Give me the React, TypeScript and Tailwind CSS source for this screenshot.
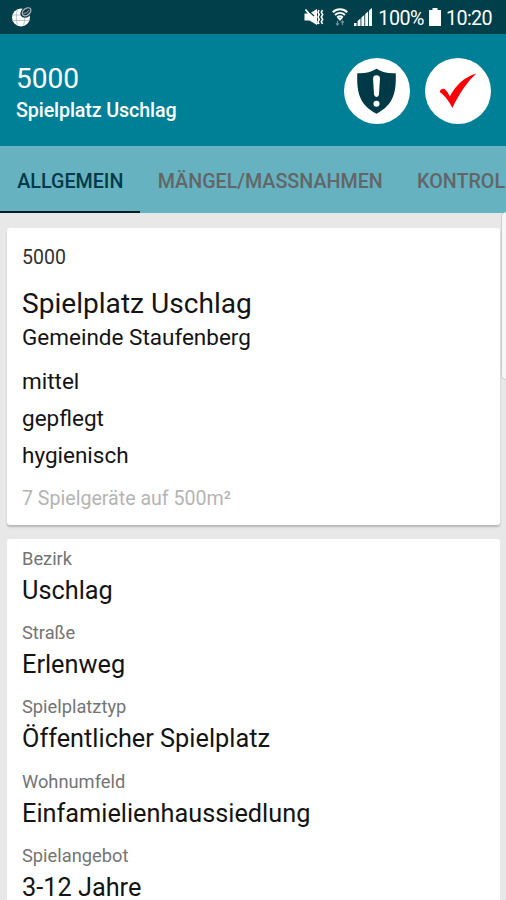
const tabs = ["ALLGEMEIN", "MÄNGEL/MASSNAHMEN", "KONTROL"]

const ratings = ["mittel", "gepflegt", "hygienisch"]

const details = [
    { label: "Bezirk", value: "Uschlag" },
    { label: "Straße", value: "Erlenweg" },
    { label: "Spielplatztyp", value: "Öffentlicher Spielplatz" },
    { label: "Wohnumfeld", value: "Einfamielienhaussiedlung" },
    { label: "Spielangebot", value: "3-12 Jahre" },
]

const GlobeIcon = () => (
    <svg width="22" height="22" viewBox="0 0 22 22" fill="none">
        <circle cx="10" cy="11.500" r="9" fill="#fff" />
        <path d="M1 9h17M1 14.500h17M6.500 3.500c-1.600 5-1.600 11 0 16M12.500 3.500c1.800 5 1.800 11 0 16" stroke="#a3b5b9" strokeWidth="0.8" />
        <ellipse cx="15" cy="6.500" rx="6" ry="4.800" transform="rotate(-35 15 6.500)" fill="#17343f" />
        <ellipse cx="15.600" cy="5.800" rx="4.900" ry="3.200" transform="rotate(-40 15.600 5.800)" stroke="#a9bec5" strokeWidth="1.300" />
        <path d="M12.500 7.500c2.200 0 4.500-1.500 5.500-3.500" stroke="#a9bec5" strokeWidth="0.9" />
    </svg>
)

const StatusBar = () => (
    <div className="flex h-[34px] shrink-0 items-center justify-between bg-[#01404b] pr-[14px] pl-[11px]">
        <GlobeIcon />
        <div className="flex items-center text-white">
            <svg width="20" height="18" viewBox="0 0 20 18" fill="none">
                <path d="M0.500 5.500h5L13 1v16l-7.500-4.500h-5z" fill="#fff" />
                <path d="M3 1.500L10 8" stroke="#01404b" strokeWidth="1.200" />
                <path d="M1.500 1.500L13.500 16" stroke="#fff" strokeWidth="1.800" />
                <path d="M15 2l-1 2.300 1.200 2.300-1.200 2.400 1.200 2.400-1.200 2.300 1 2.300M18.500 2l-1.200 2.300 1.400 2.300-1.400 2.400 1.400 2.400-1.400 2.300 1.200 2.300" stroke="#fff" strokeWidth="1.600" />
            </svg>
            <svg className="ml-2" width="16" height="18" viewBox="0 0 16 18" fill="none">
                <path d="M0.800 4.200c4-4 10.400-4 14.400 0M3 7c3-2.700 7-2.700 10 0M5.200 9.600c1.700-1.400 3.900-1.400 5.600 0" stroke="#fff" strokeWidth="2.100" />
                <path d="M5.500 10h5L8 13z" fill="#fff" />
                <path d="M5.500 12.800v4M4 15.300l1.500 1.800L7 15.300M10.500 17.200v-4M9 14.700l1.500-1.800 1.500 1.800" stroke="#6f959c" strokeWidth="1.100" />
            </svg>
            <svg className="ml-1.5" width="18" height="18" viewBox="0 0 18 18" fill="#fff">
                <path d="M0 15h2.500v3H0zM3.600 13l2.900-2.500V18H3.600zM7.400 9.500l2.900-2.500v11H7.400zM11.200 6l2.900-2.500V18h-2.900zM15 2.500L18 0v18h-3z" />
            </svg>
            <span className="ml-1.5 pt-1 text-[19.700px] leading-6 tracking-[-0.500px]">100%</span>
            <svg className="ml-[5px]" width="12" height="18" viewBox="0 0 12 18" fill="#fff">
                <path d="M3.500 0h5v2H12v16H0V2h3.500z" />
            </svg>
            <span className="ml-[5px] pt-1 text-[19.700px] leading-6 tracking-[-0.600px]">10:20</span>
        </div>
    </div>
)

const Header = () => (
    <div className="flex h-[112px] shrink-0 items-center justify-between bg-[#008097] pr-[15px] pl-4 text-white">
        <div className="pt-[10px]">
            <h1 className="text-[28.100px] leading-8">5000</h1>
            <p className="text-[19.700px] leading-8 font-medium tracking-[-0.120px]">Spielplatz Uschlag</p>
        </div>
        <div className="flex gap-[15px] pt-px">
            <button className="size-[66px] rounded-full bg-white">
                <svg width="66" height="66" viewBox="0 0 67 67">
                    <path d="M33 11C27.500 14.500 20.500 16 13.500 15.500c-.7 18 1.500 32 19.500 41 18-9 20.200-23 19.500-41-7 .5-14-1-19.500-4.500z" fill="#013946" />
                    <path d="M29.500 21q0-3.500 3.500-3.500t3.500 3.500l-1 16q-.3 2.500-2.500 2.500T30.500 37z" fill="#fff" />
                    <circle cx="33" cy="46.500" r="3.100" fill="#fff" />
                </svg>
            </button>
            <button className="size-[66px] rounded-full bg-white">
                <svg width="66" height="66" viewBox="0 0 67 67">
                    <path d="M15 34.500c.5-2.500 2.500-3.700 4.800-3 2.300 2 4 4.500 5.400 7.500 6-11 14-19.500 27-23.300-9.500 8.500-17 20-24.500 35C24.500 44 21 39 15 34.500z" fill="#fb0007" />
                </svg>
            </button>
        </div>
    </div>
)

const TabBar = () => (
    <div className="flex h-[67px] shrink-0 overflow-hidden bg-[#66b2c0]">
        {tabs.map((tab, i) => (
            <div
                key={tab}
                className={`flex shrink-0 items-center border-b-2 pt-[7px] pr-[17px] pl-[17.300px] text-[19.700px] font-medium ${i === 0 ? "border-[#061d24] text-[#013a48]" : "border-transparent text-[#626668]"}`}
            >
                {tab}
            </div>
        ))}
    </div>
)

export default function App() {
    return (
        <div className="relative flex h-screen w-full flex-col overflow-hidden bg-[#e8e8e8] font-[Roboto,sans-serif] text-[#141414]">
            <StatusBar />
            <Header />
            <TabBar />
            <div className="flex flex-col gap-[14px] pt-[15px] pr-1.5 pl-[7px]">
                <div className="h-[297px] rounded-[3px] bg-white px-[15px] pt-[18px] shadow-[0_2px_2px_rgba(0,0,0,0.220)]">
                    <p className="text-[19.500px] leading-6 text-[#303030]">5000</p>
                    <h2 className="mt-[18px] text-[28.100px] leading-8">Spielplatz Uschlag</h2>
                    <p className="mt-1 text-[22.500px] leading-[26px]">Gemeinde Staufenberg</p>
                    <div className="mt-[13px]">
                        {ratings.map((rating) => (
                            <p key={rating} className="text-[22.500px] leading-[37.200px]">{rating}</p>
                        ))}
                    </div>
                    <p className="mt-3 text-[19.600px] leading-6 text-[#b4b4b4]">7 Spielgeräte auf 500m²</p>
                </div>
                <div className="rounded-[3px] bg-white px-[15px] pt-[9px]">
                    {details.map((item) => (
                        <div key={item.label} className="h-[74.200px]">
                            <p className="text-[18.300px] leading-[22px] text-[#747474]">{item.label}</p>
                            <p className="mt-1 text-[25.300px] leading-[34px]">{item.value}</p>
                        </div>
                    ))}
                </div>
            </div>
            {/* edge panel handle */}
            <div className="absolute top-[212px] right-0 h-[168px] w-[5px] rounded-l-[5px] border border-r-0 border-[#cccccc] bg-[#f7f7f7]"></div>
        </div>
    )
}
